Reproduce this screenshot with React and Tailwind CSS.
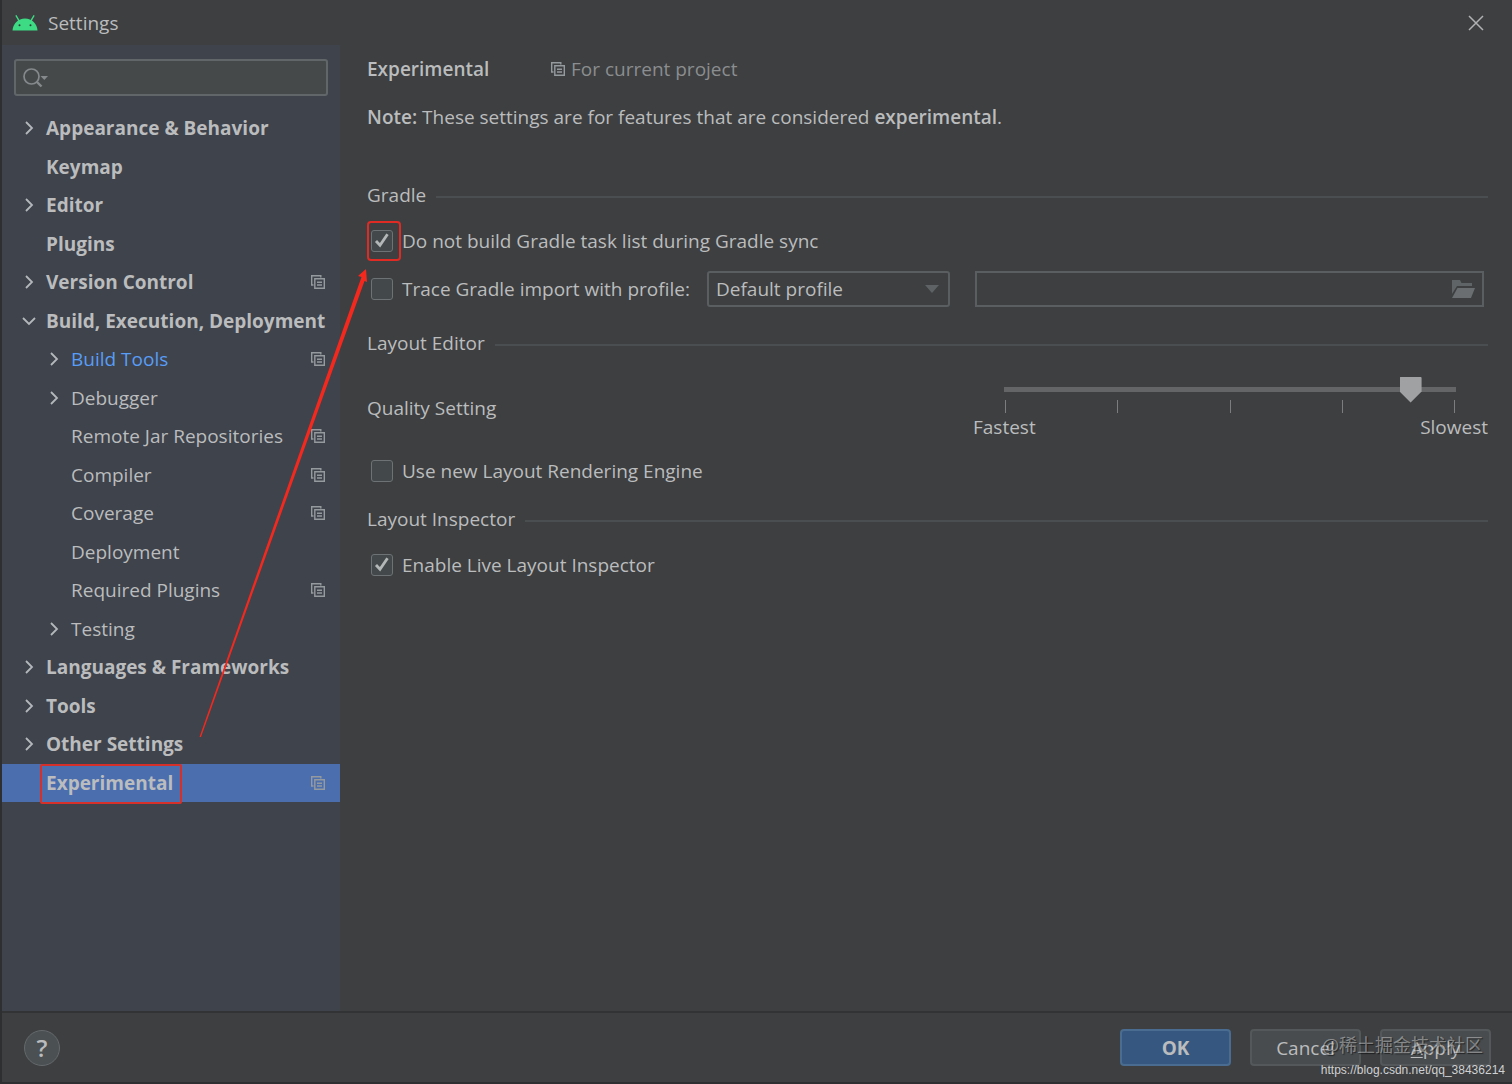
import React from "react";

const tree = [
  { label: "Appearance & Behavior", arrow: "right" },
  { label: "Keymap" },
  { label: "Editor", arrow: "right" },
  { label: "Plugins" },
  { label: "Version Control", arrow: "right", project: true },
  { label: "Build, Execution, Deployment", arrow: "down" },
  { label: "Build Tools", child: true, arrow: "right", project: true, accent: true },
  { label: "Debugger", child: true, arrow: "right" },
  { label: "Remote Jar Repositories", child: true, project: true },
  { label: "Compiler", child: true, project: true },
  { label: "Coverage", child: true, project: true },
  { label: "Deployment", child: true },
  { label: "Required Plugins", child: true, project: true },
  { label: "Testing", child: true, arrow: "right" },
  { label: "Languages & Frameworks", arrow: "right" },
  { label: "Tools", arrow: "right" },
  { label: "Other Settings", arrow: "right" },
  { label: "Experimental", project: true, selected: true },
];

function Chevron({ dir }) {
  return (
    <svg viewBox="0 0 14 14" className="size-[14px]" fill="none" stroke="#b4b8bb" strokeWidth="1.8" aria-hidden="true">
      {dir === "right" && <path d="M4 1l6 6-6 6" />}
      {dir === "down" && <path d="M1 4l6 6 6-6" />}
    </svg>
  );
}

function ProjectIcon() {
  return (
    <svg viewBox="0 0 14 14" className="size-[14px] shrink-0" fill="none" stroke="#959a9e" strokeWidth="1.4" aria-hidden="true">
      <path d="M2.5 10H.7V.7h9.1v1.8" />
      <path d="M3.8 3.8h9.5v9.5H3.8z" />
      <path d="M6 7.2h5M6 10h5" />
    </svg>
  );
}

function AndroidIcon() {
  return (
    <svg viewBox="0 0 26 16" className="h-4 w-[26px]" aria-hidden="true">
      <path d="M4.2.8l2.6 4.6M21.8.8l-2.6 4.6" stroke="#3ddc84" strokeWidth="1.4" strokeLinecap="round" />
      <path d="M.5 15.5C1 8.6 6 3.5 13 3.5s12 5.1 12.500 12z" fill="#3ddc84" />
      <circle cx="7.5" cy="10.3" r="1" fill="#2c3e36" />
      <circle cx="18.5" cy="10.3" r="1" fill="#2c3e36" />
    </svg>
  );
}

function TreeRow({ item }) {
  return (
    <li className={item.selected ? "bg-[#4b6eaf]" : ""}>
      <button
        type="button"
        className={`flex h-full w-full items-center pr-[15px] text-left ${item.child ? "pl-[45px]" : "pl-5"} ${item.accent ? "text-[#589df6]" : "text-[#bbbcbd]"}`}
      >
        <span className="mr-[10px] w-[14px] shrink-0">
          <Chevron dir={item.arrow} />
        </span>
        <span className={`relative flex-1 whitespace-nowrap ${item.child ? "" : "font-bold"}`}>
          {item.label}
          {item.selected && (
            <span className="absolute -top-[5px] -left-[6px] h-10 w-[142px] rounded-xs border-2 border-[#d6302b]" />
          )}
        </span>
        {item.project && <ProjectIcon />}
      </button>
    </li>
  );
}

function Check({ label, checked, marked }) {
  return (
    <label className="ml-1 flex w-fit items-center gap-[9px]">
      <span className="relative flex size-[22px]">
        <input
          type="checkbox"
          defaultChecked={checked}
          className="peer size-[22px] appearance-none rounded-[3px] border border-[#6d7274] bg-[#43494a]"
        />
        <svg
          viewBox="0 0 22 22"
          className="pointer-events-none absolute inset-0 hidden peer-checked:block"
          fill="none"
          stroke="#b4b7b8"
          strokeWidth="2.8"
          aria-hidden="true"
        >
          <path d="M5 11l4 4.300 7.500-11" />
        </svg>
        {marked && (
          <span className="pointer-events-none absolute -top-[9px] -left-1 h-10 w-[34px] rounded-sm border-2 border-[#e02a24]" />
        )}
      </span>
      <span className="whitespace-nowrap">{label}</span>
    </label>
  );
}

function Section({ title }) {
  return (
    <div className="flex items-center gap-[10px]">
      <h2>{title}</h2>
      <div className="mt-1 h-[2px] flex-1 bg-[#4b4e50]" />
    </div>
  );
}

function Folder() {
  return (
    <svg viewBox="0 0 23 18" className="h-[18px] w-[23px]" aria-hidden="true">
      <path d="M0 14V0h8l1.500 3H20v3H5z" fill="#5f6567" />
      <path d="M5.500 8H23l-4 10H0z" fill="#6a6e70" />
    </svg>
  );
}

export default function App() {
  return (
    <div className="relative flex min-h-screen flex-col border-b-2 border-l-2 border-[#2d2f31] bg-[#3d3f41] font-['Open_Sans','Noto_Sans',sans-serif] text-[19px] leading-7 text-[#bbbcbd]">
      <header className="flex h-[45px] items-center gap-[10px] pr-7 pl-[10px]">
        <AndroidIcon />
        <h1 className="flex-1">Settings</h1>
        <button type="button" aria-label="Close">
          <svg viewBox="0 0 16 16" className="size-4" stroke="#b0b1b2" strokeWidth="1.5" aria-hidden="true">
            <path d="M1 1l14 14M15 1L1 15" />
          </svg>
        </button>
      </header>

      <div className="flex flex-1">
        <nav className="w-[338px] shrink-0 bg-[#3e434c] pt-[14px]">
          <div className="mx-3 flex h-[37px] items-center rounded-[3px] border-2 border-[#616668] bg-[#45494a] pl-[7px]">
            <svg viewBox="0 0 26 20" className="h-5 w-[26px] shrink-0" fill="none" stroke="#85898b" aria-hidden="true">
              <circle cx="8.5" cy="8.5" r="7.5" strokeWidth="1.7" />
              <path d="M13.500 13.500l5 5" strokeWidth="2.4" />
              <path d="M17.500 8H25l-3.700 4z" fill="#85898b" stroke="none" />
            </svg>
            <input type="text" aria-label="Search settings" className="min-w-0 flex-1 bg-transparent px-1 outline-none" />
          </div>
          <ul className="mt-[13px] grid min-h-[693px] auto-rows-fr">
            {tree.map((item) => (
              <TreeRow key={item.label} item={item} />
            ))}
          </ul>
        </nav>

        <main className="min-w-0 flex-1 pt-[10px] pr-6 pl-[27px]">
          <div className="flex items-center">
            <h2 className="w-[184px] font-semibold">Experimental</h2>
            <ProjectIcon />
            <span className="ml-[6px] text-[#8b8d8f]">For current project</span>
          </div>
          <p className="mt-5">
            <b className="font-semibold">Note:</b> These settings are for features that are considered{" "}
            <b className="font-semibold">experimental</b>.
          </p>

          <div className="mt-[50px]">
            <Section title="Gradle" />
          </div>
          <div className="mt-[18px]">
            <Check label="Do not build Gradle task list during Gradle sync" checked marked />
          </div>
          <div className="mt-4 flex h-9 items-center">
            <div className="w-[340px]">
              <Check label="Trace Gradle import with profile:" />
            </div>
            <div className="relative flex">
              <select
                aria-label="Profile"
                className="h-9 w-[243px] appearance-none rounded-[3px] border-2 border-[#5b5e60] bg-[#3d3f41] pl-[7px]"
              >
                <option>Default profile</option>
              </select>
              <svg viewBox="0 0 14 8" className="pointer-events-none absolute top-[14px] right-[11px] h-2 w-[14px]" fill="#5f6264" aria-hidden="true">
                <path d="M0 0h14L7 8z" />
              </svg>
            </div>
            <div className="mr-1 ml-[25px] flex h-9 flex-1 items-center border-2 border-[#5b5e60] pr-[7px]">
              <input type="text" aria-label="Profile file" className="min-w-0 flex-1 bg-transparent px-2 outline-none" />
              <button type="button" aria-label="Browse">
                <Folder />
              </button>
            </div>
          </div>

          <div className="mt-[22px]">
            <Section title="Layout Editor" />
          </div>
          <div className="mt-[19px] flex h-[66px] items-start justify-between">
            <label htmlFor="quality" className="mt-[18px]">
              Quality Setting
            </label>
            <div className="w-[515px]">
              <div className="mr-8 ml-[31px]">
                <input
                  id="quality"
                  type="range"
                  min="0"
                  max="100"
                  defaultValue="92"
                  className="block h-[26px] w-full appearance-none bg-transparent [&::-webkit-slider-runnable-track]:h-[5px] [&::-webkit-slider-runnable-track]:bg-[#636566] [&::-webkit-slider-thumb]:-mt-[10px] [&::-webkit-slider-thumb]:h-[26px] [&::-webkit-slider-thumb]:w-[22px] [&::-webkit-slider-thumb]:appearance-none [&::-webkit-slider-thumb]:bg-[#9fa1a2] [&::-webkit-slider-thumb]:[clip-path:polygon(5%_0,95%_0,100%_5%,100%_58%,50%_100%,0_58%,0_5%)]"
                />
                <div className="-mt-[2px] flex justify-between px-px">
                  {[0, 1, 2, 3, 4].map((t) => (
                    <span key={t} className="h-[13px] w-px bg-[#7b7d7e]" />
                  ))}
                </div>
              </div>
              <div className="flex justify-between">
                <span>Fastest</span>
                <span>Slowest</span>
              </div>
            </div>
          </div>
          <div className="mt-[15px]">
            <Check label="Use new Layout Rendering Engine" />
          </div>
          <div className="mt-5">
            <Section title="Layout Inspector" />
          </div>
          <div className="mt-[18px]">
            <Check label="Enable Live Layout Inspector" checked />
          </div>
        </main>
      </div>

      <footer className="flex h-[71px] items-center border-t-2 border-[#313335] pr-[21px] pl-[22px]">
        <button type="button" aria-label="Help" className="size-9 rounded-full border border-[#65696b] bg-[#4b5052] text-[24px] font-semibold">
          ?
        </button>
        <div className="ml-auto flex gap-[19px]">
          <button type="button" className="h-[37px] w-[111px] rounded-[4px] border-2 border-[#4a6c90] bg-[#365880] font-bold">
            OK
          </button>
          <button type="button" className="h-[37px] w-[111px] rounded-[4px] border-2 border-[#54585a] bg-[#484c4e]">
            Cancel
          </button>
          <button type="button" className="h-[37px] w-[111px] rounded-[4px] border-2 border-[#54585a] bg-[#484c4e]">
            <u className="underline-offset-2">A</u>pply
          </button>
        </div>
      </footer>

      <svg viewBox="0 0 172 470" className="pointer-events-none absolute top-[268px] left-[196px] h-[470px] w-[172px]" fill="#f5281e" aria-hidden="true">
        <path d="M1.500 469L163.500 9l-3.500-1L168 1l1 13-2.500-1L3 469z" />
      </svg>
      <div className="pointer-events-none absolute right-[29px] bottom-6 font-['Noto_Sans_CJK_SC',sans-serif] text-[18px] text-white/40 [text-shadow:1px_1px_1px_#0008]">
        @稀土掘金技术社区
      </div>
      <div className="pointer-events-none absolute right-[7px] bottom-1 font-['Liberation_Sans',sans-serif] text-[12px] leading-4 text-[#d0d1d2]">
        https://blog.csdn.net/qq_38436214
      </div>
    </div>
  );
}
